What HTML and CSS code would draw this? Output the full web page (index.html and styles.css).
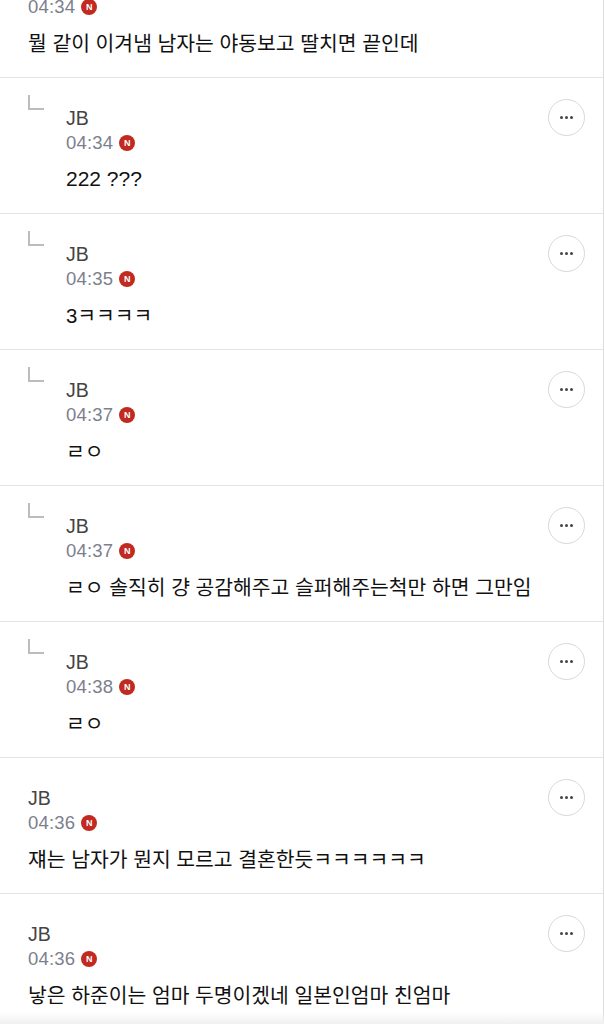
FILE: index.html
```html
<!DOCTYPE html>
<html lang="ko">

<head>
    <meta charset="UTF-8">
    <meta name="viewport" content="width=device-width, initial-scale=1.0">
    <title>댓글</title>
    <link rel="stylesheet" href="styles.css">
</head>

<body>
    <div class="list">
        <div class="row">
            <div class="body">
                <div class="name">JB</div>
                <div class="meta"><span class="time">04:34</span><span class="badge">N</span></div>
                <p class="text">뭘 같이 이겨냄 남자는 야동보고 딸치면 끝인데</p>
            </div>
        </div>
        <div class="row">
            <div class="reply"></div>
            <div class="body">
                <div class="name">JB</div>
                <div class="meta"><span class="time">04:34</span><span class="badge">N</span></div>
                <p class="text latin">222 ???</p>
            </div>
            <button class="more"><span></span><span></span><span></span></button>
        </div>
        <div class="row">
            <div class="reply"></div>
            <div class="body">
                <div class="name">JB</div>
                <div class="meta"><span class="time">04:35</span><span class="badge">N</span></div>
                <p class="text">3ㅋㅋㅋㅋ</p>
            </div>
            <button class="more"><span></span><span></span><span></span></button>
        </div>
        <div class="row">
            <div class="reply"></div>
            <div class="body">
                <div class="name">JB</div>
                <div class="meta"><span class="time">04:37</span><span class="badge">N</span></div>
                <p class="text">ㄹㅇ</p>
            </div>
            <button class="more"><span></span><span></span><span></span></button>
        </div>
        <div class="row">
            <div class="reply"></div>
            <div class="body">
                <div class="name">JB</div>
                <div class="meta"><span class="time">04:37</span><span class="badge">N</span></div>
                <p class="text">ㄹㅇ 솔직히 걍 공감해주고 슬퍼해주는척만 하면 그만임</p>
            </div>
            <button class="more"><span></span><span></span><span></span></button>
        </div>
        <div class="row">
            <div class="reply"></div>
            <div class="body">
                <div class="name">JB</div>
                <div class="meta"><span class="time">04:38</span><span class="badge">N</span></div>
                <p class="text">ㄹㅇ</p>
            </div>
            <button class="more"><span></span><span></span><span></span></button>
        </div>
        <div class="row">
            <div class="body">
                <div class="name">JB</div>
                <div class="meta"><span class="time">04:36</span><span class="badge">N</span></div>
                <p class="text">쟤는 남자가 뭔지 모르고 결혼한듯ㅋㅋㅋㅋㅋㅋ</p>
            </div>
            <button class="more"><span></span><span></span><span></span></button>
        </div>
        <div class="row">
            <div class="body">
                <div class="name">JB</div>
                <div class="meta"><span class="time">04:36</span><span class="badge">N</span></div>
                <p class="text">낳은 하준이는 엄마 두명이겠네 일본인엄마 친엄마</p>
            </div>
            <button class="more"><span></span><span></span><span></span></button>
        </div>
    </div>
    <div class="fade"></div>
</body>

</html>
```

FILE: styles.css
```css
html,
body {
    margin: 0;
    height: 1024px;
    overflow: hidden;
    background-color: #fff;
}

body {
    font-family: "Liberation Sans", "Noto Sans CJK KR", sans-serif;
    color: #111;
}

.list {
    margin-top: -58px;
    width: 603px;
    border-right: 1px solid #dedede;
}

.row {
    display: flex;
    align-items: flex-start;
    box-sizing: border-box;
    height: 136px;
    padding: 29px 18px 0 28px;
    border-bottom: 1px solid #e4e4e4;
}

.reply {
    flex: none;
    box-sizing: border-box;
    width: 16px;
    height: 15px;
    margin-right: 22px;
    margin-top: -12px;
    border-left: 2px solid #bcbcc0;
    border-bottom: 2px solid #bcbcc0;
}

.body {
    flex: 1;
}

.name {
    font-size: 19.5px;
    line-height: 22px;
    color: #444;
}

.meta {
    display: flex;
    align-items: center;
    gap: 6px;
    margin-top: 3px;
    height: 22px;
}

.time {
    font-size: 18.5px;
    letter-spacing: 0.2px;
    color: #7c808c;
}

.badge {
    display: flex;
    justify-content: center;
    align-items: center;
    width: 16px;
    height: 16px;
    border-radius: 50%;
    background-color: #c12a20;
    color: #fff;
    font-size: 9px;
    font-weight: bold;
}

.text {
    margin: 14px 0 0;
    font-size: 20.4px;
    line-height: 24px;
}

.latin {
    font-size: 21px;
    line-height: 22px;
}

.more {
    flex: none;
    display: flex;
    justify-content: center;
    align-items: center;
    gap: 2px;
    box-sizing: border-box;
    width: 37px;
    height: 37px;
    margin-top: -8px;
    padding: 0;
    border: 1px solid #d8d8d8;
    border-radius: 50%;
    background-color: #fff;
}

.more span {
    width: 3px;
    height: 3px;
    border-radius: 50%;
    background-color: #444;
}

.fade {
    position: absolute;
    left: 0;
    right: 0;
    bottom: 0;
    height: 12px;
    background: linear-gradient(rgba(240, 240, 240, 0), #f0f0f0);
}
```
